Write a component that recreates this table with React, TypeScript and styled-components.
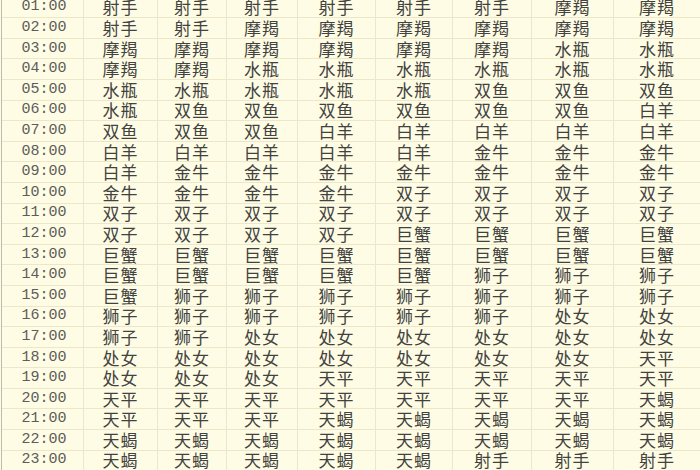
import React from 'react';
import styled, {createGlobalStyle} from 'styled-components';

const GlobalStyle = createGlobalStyle`
  html, body {
    margin: 0;
    padding: 0;
    background: #fefce4;
    overflow: hidden;
  }
`

const Page = styled.div`
  width: 700px;
  height: 470px;
  overflow: hidden;
  padding-left: 1px;
  background: #fefce4;
`

const Sheet = styled.div`
  display: grid;
  grid-template-columns: 82px 74px 69px 71px 78px 77px 79px 82px 1fr;
  grid-auto-rows: 20.6px;
  margin-top: -2.4px;
  border-left: 1px solid #bdbcae;
`

const Cell = styled.div`
  display: flex;
  align-items: center;
  justify-content: center;
  border-right: 1px solid #ece7c8;
  border-bottom: 1px solid #ece7c8;
  white-space: nowrap;
  line-height: 18px;
`

const TimeCell = styled(Cell)`
  font-family: "Liberation Mono", "DejaVu Sans Mono", monospace;
  font-size: 15px;
  color: #5c5c5a;
  padding-left: 3px;
`

const SignCell = styled(Cell)`
  font-family: "Noto Sans CJK SC", "Noto Sans", sans-serif;
  font-size: 17px;
  color: #424240;
  letter-spacing: 1px;
`

const rows: string[][] = [
  ['射手', '射手', '射手', '射手', '射手', '射手', '摩羯', '摩羯'],
  ['射手', '射手', '摩羯', '摩羯', '摩羯', '摩羯', '摩羯', '摩羯'],
  ['摩羯', '摩羯', '摩羯', '摩羯', '摩羯', '摩羯', '水瓶', '水瓶'],
  ['摩羯', '摩羯', '水瓶', '水瓶', '水瓶', '水瓶', '水瓶', '水瓶'],
  ['水瓶', '水瓶', '水瓶', '水瓶', '水瓶', '双鱼', '双鱼', '双鱼'],
  ['水瓶', '双鱼', '双鱼', '双鱼', '双鱼', '双鱼', '双鱼', '白羊'],
  ['双鱼', '双鱼', '双鱼', '白羊', '白羊', '白羊', '白羊', '白羊'],
  ['白羊', '白羊', '白羊', '白羊', '白羊', '金牛', '金牛', '金牛'],
  ['白羊', '金牛', '金牛', '金牛', '金牛', '金牛', '金牛', '金牛'],
  ['金牛', '金牛', '金牛', '金牛', '双子', '双子', '双子', '双子'],
  ['双子', '双子', '双子', '双子', '双子', '双子', '双子', '双子'],
  ['双子', '双子', '双子', '双子', '巨蟹', '巨蟹', '巨蟹', '巨蟹'],
  ['巨蟹', '巨蟹', '巨蟹', '巨蟹', '巨蟹', '巨蟹', '巨蟹', '巨蟹'],
  ['巨蟹', '巨蟹', '巨蟹', '巨蟹', '巨蟹', '狮子', '狮子', '狮子'],
  ['巨蟹', '狮子', '狮子', '狮子', '狮子', '狮子', '狮子', '狮子'],
  ['狮子', '狮子', '狮子', '狮子', '狮子', '狮子', '处女', '处女'],
  ['狮子', '狮子', '处女', '处女', '处女', '处女', '处女', '处女'],
  ['处女', '处女', '处女', '处女', '处女', '处女', '处女', '天平'],
  ['处女', '处女', '处女', '天平', '天平', '天平', '天平', '天平'],
  ['天平', '天平', '天平', '天平', '天平', '天平', '天平', '天蝎'],
  ['天平', '天平', '天平', '天蝎', '天蝎', '天蝎', '天蝎', '天蝎'],
  ['天蝎', '天蝎', '天蝎', '天蝎', '天蝎', '天蝎', '天蝎', '天蝎'],
  ['天蝎', '天蝎', '天蝎', '天蝎', '天蝎', '射手', '射手', '射手'],
]

const App = () => {
  return <Page>
    <GlobalStyle />
    <Sheet>
      {rows.map((signs, i) => {
        const hour = String(i + 1).padStart(2, '0') + ':00';
        return <React.Fragment key={hour}>
          <TimeCell>{hour}</TimeCell>
          {signs.map((s, j) => <SignCell key={j}>{s}</SignCell>)}
        </React.Fragment>
      })}
    </Sheet>
  </Page>
}

export default App;
